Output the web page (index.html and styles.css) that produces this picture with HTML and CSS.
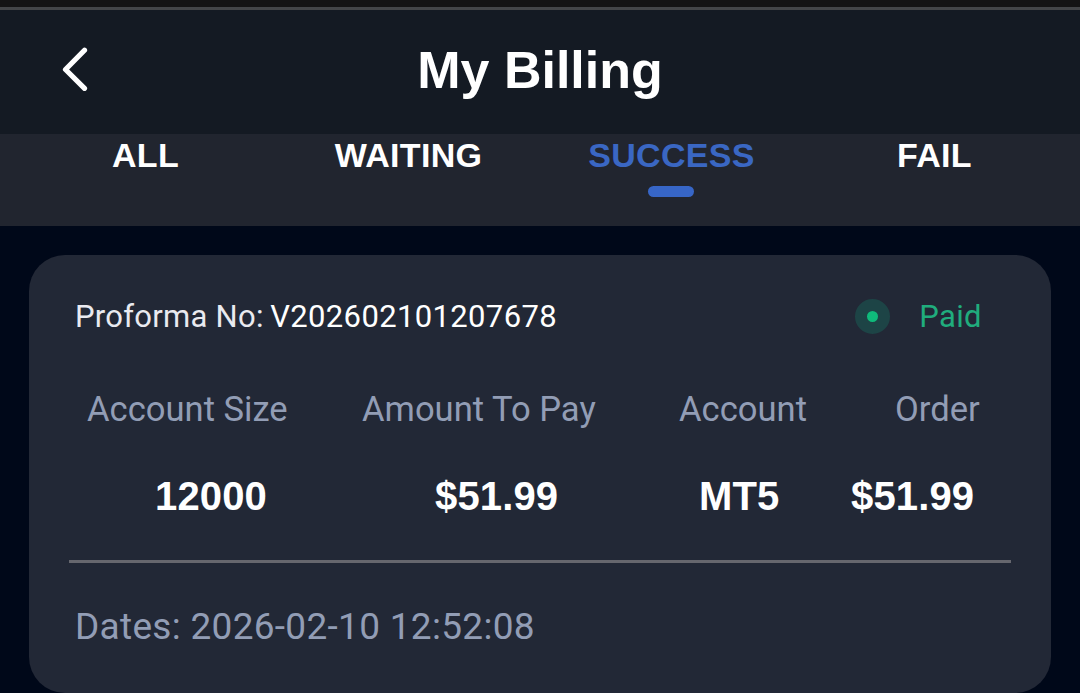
FILE: index.html
```html
<!DOCTYPE html>
<html lang="en">
<head>
    <meta charset="UTF-8">
    <meta name="viewport" content="width=device-width, initial-scale=1.0">
    <title>My Billing</title>
    <link rel="stylesheet" href="styles.css">
</head>
<body>
    <div class="top-strip"></div>
    <header class="header">
        <a class="back" href="#" aria-label="Back">
            <svg width="30" height="46" viewBox="0 0 30 46">
                <path d="M24.5 3.2 L5.5 22.5 L24.5 41.3" fill="none" stroke="#fff" stroke-width="5.2" stroke-linecap="round" stroke-linejoin="round"/>
            </svg>
        </a>
        <h1>My Billing</h1>
    </header>
    <nav class="tabs">
        <a class="tab tab-all">ALL</a>
        <a class="tab tab-waiting">WAITING</a>
        <a class="tab tab-success active">SUCCESS</a>
        <a class="tab tab-fail">FAIL</a>
    </nav>
    <main class="content">
        <div class="card">
            <div class="card-head">
                <div class="proforma"><span class="label">Proforma No:</span> <span class="number">V202602101207678</span></div>
                <div class="status"><span class="dot"></span><span class="paid">Paid</span></div>
            </div>
            <div class="details">
                <div class="names">
                    <span class="size">Account Size</span>
                    <span class="amount">Amount To Pay</span>
                    <span class="account">Account</span>
                    <span class="order">Order</span>
                </div>
                <div class="values">
                    <span class="size">12000</span>
                    <span class="amount">$51.99</span>
                    <span class="account">MT5</span>
                    <span class="order">$51.99</span>
                </div>
            </div>
            <div class="dates">Dates: 2026-02-10 12:52:08</div>
        </div>
    </main>
</body>
</html>
```

FILE: styles.css
```css
* {
    box-sizing: border-box;
}
body {
    margin: 0;
    height: 693px;
    overflow: hidden;
    background: #000819;
    color: #fff;
    font-family: "Liberation Sans", Arial, sans-serif;
}
.top-strip {
    height: 10px;
    background: #141414;
    border-bottom: 3px solid #444648;
}
.header {
    height: 124px;
    padding-bottom: 4px;
    display: grid;
    grid-template-columns: 120px 1fr 120px;
    align-items: center;
    background: #141a23;
}
.back {
    height: 46px;
    padding-left: 60px;
}
.back svg {
    display: block;
}
h1 {
    margin: 0;
    text-align: center;
    font-size: 52px;
    line-height: 60px;
}
.tabs {
    height: 92px;
    display: flex;
    background: #21252f;
}
.tab {
    display: flex;
    flex-direction: column;
    align-items: center;
    font-size: 34px;
    font-weight: bold;
    line-height: 42px;
    letter-spacing: 0.3px;
    white-space: nowrap;
}
.tab-all {
    width: 291px;
}
.tab-waiting {
    width: 235px;
}
.tab-success {
    width: 291px;
}
.tab-fail {
    width: 235px;
}
.active {
    color: #3a67c3;
}
.active::after {
    content: "";
    width: 46px;
    height: 11px;
    margin: 10px 1px 0 0;
    border-radius: 6px;
    background: #3766c7;
}
.content {
    padding: 29px;
}
.card {
    height: 438px;
    padding: 40px;
    border-radius: 36px;
    background: #222836;
    font-family: Roboto, sans-serif;
}
.card-head {
    height: 43px;
    padding: 0 29px 0 6px;
    display: flex;
    align-items: center;
    justify-content: space-between;
    font-size: 31px;
    letter-spacing: 0.27px;
    white-space: nowrap;
}
.proforma {
    word-spacing: -1.5px;
}
.label {
    color: #e9eaf0;
    word-spacing: 0;
}
.number {
    letter-spacing: 0.36px;
}
.status {
    display: flex;
    align-items: center;
    gap: 29px;
    color: #20ad7d;
}
.paid {
    letter-spacing: 0.4px;
}
.dot {
    width: 35px;
    height: 35px;
    border: 12px solid #1d4446;
    border-radius: 50%;
    background: #0fba7b;
}
.details {
    height: 225px;
    padding-top: 49px;
    border-bottom: 3px solid #66676e;
}
.names, .values {
    display: grid;
    white-space: nowrap;
}
.names {
    grid-template-columns: 275px 317px 216px auto;
    padding-left: 18px;
    color: #929db5;
    font-size: 34.6px;
    line-height: 44px;
}
.values {
    grid-template-columns: 280px 264px 152px auto;
    padding-left: 86px;
    margin-top: 43px;
    font: bold 40px/44px "Liberation Sans", Arial, sans-serif;
    letter-spacing: 0.15px;
}
.dates {
    padding: 41px 0 0 6px;
    color: #929db5;
    font-size: 37px;
    line-height: 46px;
    letter-spacing: 0.3px;
}
```
